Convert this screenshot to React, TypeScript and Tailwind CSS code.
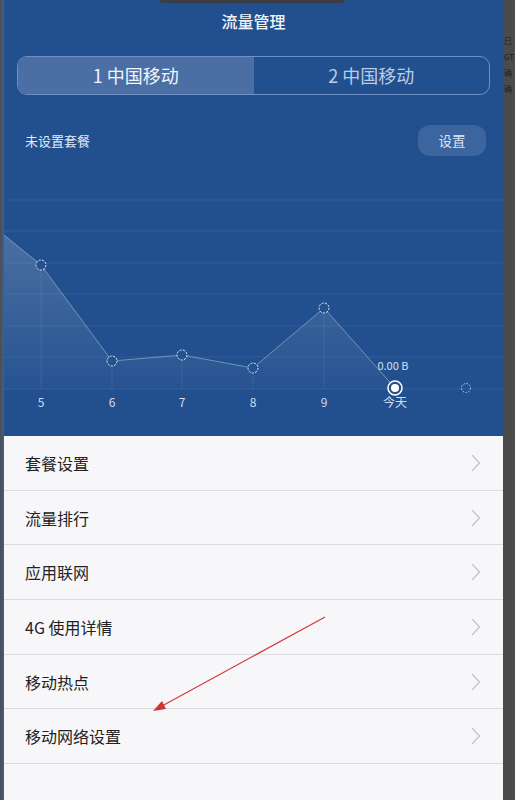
import React from "react";

const font = { fontFamily: '"Noto Sans CJK SC", "Noto Sans", sans-serif' };

const items = ["套餐设置", "流量排行", "应用联网", "4G 使用详情", "移动热点", "移动网络设置"];

function Chevron() {
  return (
    <svg width="10" height="18" viewBox="0 0 10 18" fill="none">
      <path d="M1.5 1.5 L8.5 9 L1.5 16.5" stroke="#c4c4c8" strokeWidth="1.2" strokeLinecap="round" strokeLinejoin="round" />
    </svg>
  );
}

function Chart() {
  const grid = [44, 75, 107, 138, 170, 201, 233];
  const pts: [number, number][] = [
    [37, 109],
    [108, 205],
    [178, 199],
    [249, 212],
    [320, 152],
    [391, 232],
  ];
  const linePts = [[0, 79], ...pts].map((p) => p.join(",")).join(" ");
  const areaPts = `0,233 ${linePts} 391,233`;
  const labels = [
    [37, "5"],
    [108, "6"],
    [178, "7"],
    [249, "8"],
    [320, "9"],
    [391, "今天"],
  ] as const;
  return (
    <svg width="499" height="280" viewBox="0 0 499 280" className="block">
      <defs>
        <linearGradient id="area" x1="0" y1="0" x2="0" y2="1">
          <stop offset="0" stopColor="#ffffff" stopOpacity="0.18" />
          <stop offset="1" stopColor="#ffffff" stopOpacity="0.02" />
        </linearGradient>
      </defs>
      {grid.map((y) => (
        <line key={y} x1="0" x2="499" y1={y} y2={y} stroke="#ffffff" strokeOpacity="0.07" strokeWidth="1" />
      ))}
      <polygon points={areaPts} fill="url(#area)" />
      {pts.slice(0, 5).map(([x, y]) => (
        <line key={x} x1={x} x2={x} y1={y + 5} y2={233} stroke="#ffffff" strokeOpacity="0.08" />
      ))}
      <polyline points={linePts} fill="none" stroke="#ffffff" strokeOpacity="0.35" strokeWidth="1" />
      {pts.slice(0, 5).map(([x, y]) => (
        <circle key={x} cx={x} cy={y} r="5" fill="#24528f" stroke="#dbe6f5" strokeWidth="1" strokeDasharray="2.2 1.2" />
      ))}
      <circle cx="462" cy="232" r="4.5" fill="none" stroke="#c9d6ea" strokeWidth="1" strokeDasharray="1.5 1.5" />
      <circle cx="391" cy="232" r="7" fill="#24528f" stroke="#ffffff" strokeWidth="1.5" />
      <circle cx="391" cy="232" r="4" fill="#ffffff" />
      <text x="389" y="214" textAnchor="middle" fill="#d5e0ef" fontSize="11" style={font}>
        0.00 B
      </text>
      {labels.map(([x, t]) => (
        <text key={t} x={x} y={251} textAnchor="middle" fill="#d0dcee" fontSize="12" style={font}>
          {t}
        </text>
      ))}
    </svg>
  );
}

export default function App() {
  return (
    <div className="relative flex h-[800px] w-[515px] overflow-hidden bg-[#4a4a4a]" style={font}>
      <div className="h-full w-[4px] bg-gradient-to-r from-[#4e4e4e] to-[#3b5f8f]" />
      <div className="flex h-full w-[499px] flex-col">
        <div className="relative flex h-[436px] flex-col bg-[#22508f]">
          <div className="absolute left-[156px] top-0 h-[3px] w-[185px] rounded-b-[3px] bg-[#3a3d44]" />
          <div className="flex h-[40px] items-center justify-center pt-[1px] text-[16px] font-medium text-[#eef3fa]">
            流量管理
          </div>
          <div className="mx-[13px] mt-[16px] flex h-[39px] overflow-hidden rounded-[10px] border border-[#6e90c4]">
            <div className="flex w-1/2 items-center justify-center bg-[#4b6fa5] text-[18px] text-[#f1f5fb]">
              1 中国移动
            </div>
            <div className="flex w-1/2 items-center justify-center text-[18px] text-[#b9cbe6]">2 中国移动</div>
          </div>
          <div className="mt-[30px] flex h-[31px] items-center justify-between pl-[21px] pr-[17px]">
            <span className="text-[13px] text-[#e3ebf6]">未设置套餐</span>
            <div className="flex h-[31px] w-[68px] items-center justify-center rounded-[12px] bg-[#3c649f] text-[13.5px] text-[#dbe5f3]">
              设置
            </div>
          </div>
          <Chart />
        </div>
        <div className="flex flex-1 flex-col bg-[#f7f6f9]">
          {items.map((t) => (
            <div
              key={t}
              className="flex h-[54.7px] shrink-0 items-center justify-between border-b border-[#dcdcdf] pl-[21px] pr-[22px]"
            >
              <span className="text-[16px] text-[#222222]">{t}</span>
              <Chevron />
            </div>
          ))}
        </div>
      </div>
      <div className="flex h-full w-[12px] flex-col items-start overflow-hidden bg-[#4b4b4b] pl-[1px] pt-[33px] text-[8px] leading-[16px] text-[#1f1f1f]">
        <span>已</span>
        <span>GT</span>
        <span>确</span>
        <span>确</span>
      </div>
      <svg className="pointer-events-none absolute left-0 top-0" width="515" height="800" viewBox="0 0 515 800">
        <line x1="325" y1="617" x2="162" y2="706" stroke="#cf3b3b" strokeWidth="1.2" />
        <polygon points="153,711 162,701 166,709" fill="#d23232" />
      </svg>
    </div>
  );
}
